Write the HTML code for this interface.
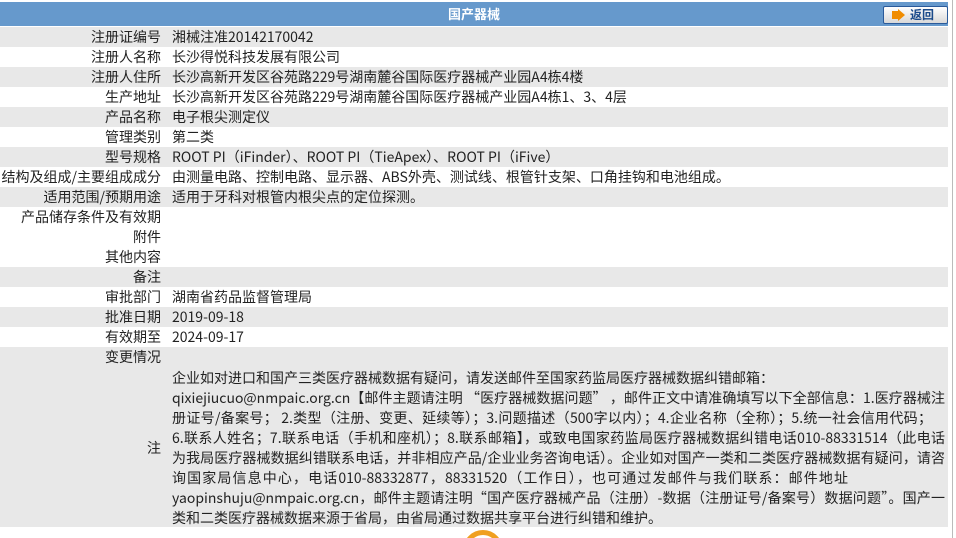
<!DOCTYPE html>
<html lang="zh-CN" style="overflow:hidden;height:538px"><head><meta charset="utf-8"><style>
body{margin:0;width:956px;height:538px;background:#fff;overflow:hidden;position:relative;font-family:"Noto Sans CJK SC","Liberation Sans",sans-serif;font-size:14px;color:#222}
.hd{position:absolute;left:0;top:2px;width:948px;height:24px;background:#6699cc;color:#fff;font-weight:bold;font-size:13px;text-align:center;line-height:24px}
.btn{position:absolute;left:883px;top:6px;width:63px;height:16px;border:1px solid #2a5a9a;border-radius:2px;background:linear-gradient(#fff,#d8d8d8);font-size:12px;color:#1a4a8a;font-weight:bold;line-height:16px}
.btn i{position:absolute;left:8px;top:4px;width:6px;height:8px;background:#f08c00}
.btn b{position:absolute;left:14px;top:2px;border-left:7px solid #f08c00;border-top:6px solid transparent;border-bottom:6px solid transparent}
.btn span{position:absolute;left:26px;top:0}
.r{position:absolute;left:0;width:948px;height:20px;line-height:20px;white-space:nowrap}
.g{background:#e8e8e8}
.l{position:absolute;right:787px;text-align:right}
.v{position:absolute;left:172px}
.vl{position:absolute;left:952px;top:0;width:1px;height:538px;background:#bbb}
.clip{position:absolute;left:440px;top:527px;width:80px;height:11px;overflow:hidden}
.n div{height:20px;white-space:nowrap;text-align:justify;text-align-last:justify;overflow:visible}
.n .f{text-align:left;text-align-last:left}
</style></head><body>
<div class="hd">国产器械</div>
<div class="btn"><i></i><b></b><span>返回</span></div>
<div class="r g" style="top:27px"><span class="l">注册证编号</span><span class="v">湘械注准20142170042</span></div>
<div class="r" style="top:47px"><span class="l">注册人名称</span><span class="v">长沙得悦科技发展有限公司</span></div>
<div class="r g" style="top:67px"><span class="l">注册人住所</span><span class="v">长沙高新开发区谷苑路229号湖南麓谷国际医疗器械产业园A4栋4楼</span></div>
<div class="r" style="top:87px"><span class="l">生产地址</span><span class="v">长沙高新开发区谷苑路229号湖南麓谷国际医疗器械产业园A4栋1、3、4层</span></div>
<div class="r g" style="top:107px"><span class="l">产品名称</span><span class="v">电子根尖测定仪</span></div>
<div class="r" style="top:127px"><span class="l">管理类别</span><span class="v">第二类</span></div>
<div class="r g" style="top:147px"><span class="l">型号规格</span><span class="v">ROOT PI（iFinder）、ROOT PI（TieApex）、ROOT PI（iFive）</span></div>
<div class="r" style="top:167px"><span class="l">结构及组成/主要组成成分</span><span class="v">由测量电路、控制电路、显示器、ABS外壳、测试线、根管针支架、口角挂钩和电池组成。</span></div>
<div class="r g" style="top:187px"><span class="l">适用范围/预期用途</span><span class="v">适用于牙科对根管内根尖点的定位探测。</span></div>
<div class="r" style="top:207px"><span class="l">产品储存条件及有效期</span></div>
<div class="r" style="top:227px"><span class="l">附件</span></div>
<div class="r" style="top:247px"><span class="l">其他内容</span></div>
<div class="r g" style="top:267px"><span class="l">备注</span></div>
<div class="r" style="top:287px"><span class="l">审批部门</span><span class="v">湖南省药品监督管理局</span></div>
<div class="r g" style="top:307px"><span class="l">批准日期</span><span class="v">2019-09-18</span></div>
<div class="r" style="top:327px"><span class="l">有效期至</span><span class="v">2024-09-17</span></div>
<div class="r g" style="top:347px;height:180px"><span class="l">变更情况</span>
<span class="l" style="top:91px">注</span>
<div class="v n" style="top:21px;line-height:20px">
<div style="width:598px">企业如对进口和国产三类医疗器械数据有疑问，请发送邮件至国家药监局医疗器械数据纠错邮箱：</div>
<div style="width:773px">qixiejiucuo@nmpaic.org.cn【邮件主题请注明 “医疗器械数据问题” ，邮件正文中请准确填写以下全部信息：1.医疗器械注</div>
<div style="width:760px">册证号/备案号； 2.类型（注册、变更、延续等）；3.问题描述（500字以内）；4.企业名称（全称）；5.统一社会信用代码；</div>
<div style="width:773px">6.联系人姓名；7.联系电话（手机和座机）；8.联系邮箱】，或致电国家药监局医疗器械数据纠错电话010-88331514（此电话</div>
<div style="width:773px">为我局医疗器械数据纠错联系电话，并非相应产品/企业业务咨询电话）。企业如对国产一类和二类医疗器械数据有疑问，请咨</div>
<div style="width:676px">询国家局信息中心，电话010-88332877，88331520（工作日），也可通过发邮件与我们联系：邮件地址</div>
<div style="width:773px">yaopinshuju@nmpaic.org.cn，邮件主题请注明“国产医疗器械产品（注册）-数据（注册证号/备案号）数据问题”。国产一</div>
<div class="f">类和二类医疗器械数据来源于省局，由省局通过数据共享平台进行纠错和维护。</div>
</div></div>
<div class="clip"><div style="position:absolute;left:23px;top:3px;width:40px;height:40px;border-radius:50%;border:5px solid #f0a020;box-sizing:border-box"></div></div>
<div class="vl"></div>
</body></html>
